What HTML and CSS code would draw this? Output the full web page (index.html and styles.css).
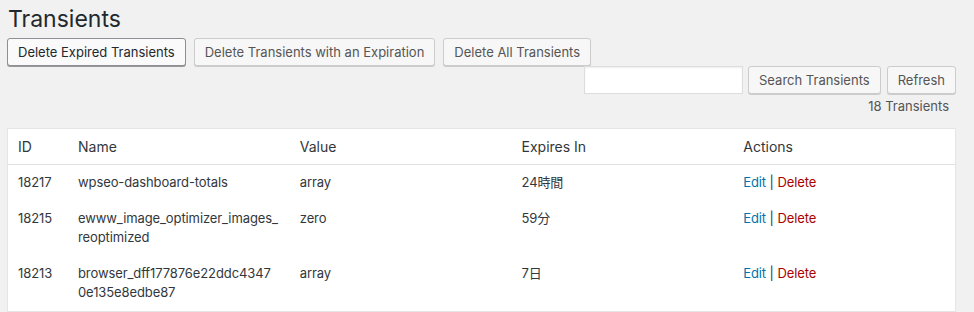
FILE: index.html
```html
<!DOCTYPE html>
<html lang="en">
<head>
  <meta charset="UTF-8" />
  <meta name="viewport" content="width=device-width, initial-scale=1.0"/>
  <title>Transients</title>
  <link rel="stylesheet" href="styles.css">
</head>
<body>
  <div class="wrap">
    <h1>Transients</h1>

    <!-- bulk delete actions -->
    <div class="bulk-actions">
      <button class="button button-focus">Delete Expired Transients</button>
      <button class="button">Delete Transients with an Expiration</button>
      <button class="button">Delete All Transients</button>
    </div>

    <!-- search + refresh -->
    <div class="search-box">
      <input type="search" class="search-input">
      <button class="button search-btn">Search Transients</button>
      <button class="button">Refresh</button>
    </div>

    <div class="count">18 Transients</div>

    <table class="widefat">
      <colgroup>
        <col class="col-id">
        <col><col><col><col>
      </colgroup>
      <thead>
        <tr><th>ID</th><th>Name</th><th>Value</th><th>Expires In</th><th>Actions</th></tr>
      </thead>
      <tbody>
        <tr>
          <td>18217</td>
          <td class="name">wpseo-dashboard-totals</td>
          <td>array</td>
          <td>24時間</td>
          <td><a href="#" class="edit">Edit</a> | <a href="#" class="delete">Delete</a></td>
        </tr>
        <tr>
          <td>18215</td>
          <td class="name">ewww_image_optimizer_images_<wbr>reoptimized</td>
          <td>zero</td>
          <td>59分</td>
          <td><a href="#" class="edit">Edit</a> | <a href="#" class="delete">Delete</a></td>
        </tr>
        <tr>
          <td>18213</td>
          <td class="name">browser_dff177876e22ddc4347<wbr>0e135e8edbe87</td>
          <td>array</td>
          <td>7日</td>
          <td><a href="#" class="edit">Edit</a> | <a href="#" class="delete">Delete</a></td>
        </tr>
      </tbody>
    </table>
  </div>
</body>
</html>
```

FILE: styles.css
```css
* { box-sizing: border-box; }
body {
  margin: 0;
  background-color: #f1f1f1;
  color: #32373c;
  font-family: Inter, "Noto Sans CJK JP", sans-serif;
  font-size: 13px;
}
.wrap {
  padding: 0 18px 20px 7px;
}
h1 {
  margin: 0 0 3px;
  padding: 5px 0 0 1px;
  font-size: 23px;
  font-weight: 400;
  line-height: 1.3;
  color: #23282d;
}

.bulk-actions {
  display: flex;
  gap: 8px;
}
.search-box {
  display: flex;
  justify-content: flex-end;
  align-items: flex-start;
  gap: 6px;
}
.button {
  height: 28px;
  padding: 0 10px;
  font-family: inherit;
  font-size: 13px;
  line-height: 26px;
  color: #555;
  background: #f7f7f7;
  border: 1px solid #ccc;
  border-radius: 3px;
  box-shadow: 0 1px 0 #ccc;
  cursor: pointer;
}
.button-focus {
  background: #fafafa;
  border-color: #8c8f94;
  color: #23282d;
  box-shadow: 0 1px 0 #999;
}
.search-input {
  width: 159px;
  height: 28px;
  margin: 0 -1px 0 0;
  background: #fff;
  border: 1px solid #ddd;
  box-shadow: inset 0 1px 2px rgba(0, 0, 0, .07);
}
.count {
  margin: 3px 0 12px;
  padding-right: 7px;
  text-align: right;
  font-size: 13px;
  line-height: 19px;
  color: #555;
}

/* list table */
.widefat {
  width: 100%;
  table-layout: fixed;
  border-spacing: 0;
  background: #fff;
  border: 1px solid #e5e5e5;
  box-shadow: 0 1px 1px rgba(0, 0, 0, .04);
}
.col-id { width: 60px; }
.widefat th, .widefat td {
  padding: 8px 10px;
  text-align: left;
  vertical-align: top;
  font-weight: 400;
  color: #32373c;
}
.widefat th {
  font-size: 14px;
  line-height: 1.4em;
  border-bottom: 1px solid #e1e1e1;
}
.widefat td {
  font-size: 13px;
  line-height: 1.5em;
  letter-spacing: -0.1px;
}
.widefat td.name { overflow-wrap: anywhere; }
a { text-decoration: none; }
a.edit { color: #0073aa; }
a.delete { color: #a00; }
```
